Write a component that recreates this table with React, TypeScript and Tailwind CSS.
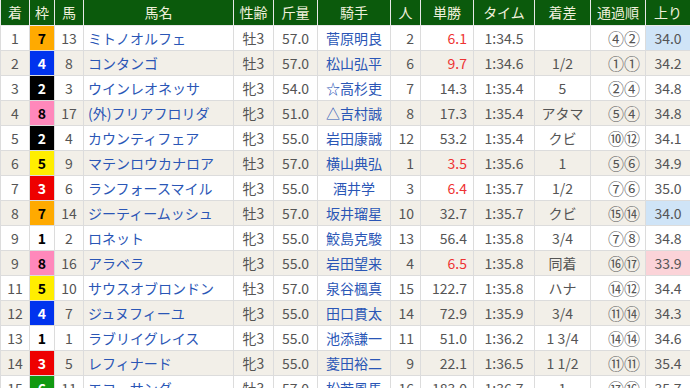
import React from 'react';

type Row = {
  rank: string;
  waku: number;
  num: string;
  name: string;
  sex: string;
  kin: string;
  jockey: string;
  pop: string;
  odds: string;
  time: string;
  diff: string;
  pass: string;
  last: string;
  lastMark?: 'blue' | 'pink';
};

const rows: Row[] = [
  { rank: '1', waku: 7, num: '13', name: 'ミトノオルフェ', sex: '牡3', kin: '57.0', jockey: '菅原明良', pop: '2', odds: '6.1', time: '1:34.5', diff: '', pass: '④②', last: '34.0', lastMark: 'blue' },
  { rank: '2', waku: 4, num: '8', name: 'コンタンゴ', sex: '牡3', kin: '57.0', jockey: '松山弘平', pop: '6', odds: '9.7', time: '1:34.6', diff: '1/2', pass: '①①', last: '34.2' },
  { rank: '3', waku: 2, num: '3', name: 'ウインレオネッサ', sex: '牝3', kin: '54.0', jockey: '☆高杉吏', pop: '7', odds: '14.3', time: '1:35.4', diff: '5', pass: '②④', last: '34.8' },
  { rank: '4', waku: 8, num: '17', name: '(外)フリアフロリダ', sex: '牝3', kin: '51.0', jockey: '△吉村誠', pop: '8', odds: '17.3', time: '1:35.4', diff: 'アタマ', pass: '⑤④', last: '34.8' },
  { rank: '5', waku: 2, num: '4', name: 'カウンティフェア', sex: '牝3', kin: '55.0', jockey: '岩田康誠', pop: '12', odds: '53.2', time: '1:35.4', diff: 'クビ', pass: '⑩⑫', last: '34.1' },
  { rank: '6', waku: 5, num: '9', name: 'マテンロウカナロア', sex: '牡3', kin: '57.0', jockey: '横山典弘', pop: '1', odds: '3.5', time: '1:35.6', diff: '1', pass: '⑤⑥', last: '34.9' },
  { rank: '7', waku: 3, num: '6', name: 'ランフォースマイル', sex: '牝3', kin: '55.0', jockey: '酒井学', pop: '3', odds: '6.4', time: '1:35.7', diff: '1/2', pass: '⑦⑥', last: '35.0' },
  { rank: '8', waku: 7, num: '14', name: 'ジーティームッシュ', sex: '牡3', kin: '57.0', jockey: '坂井瑠星', pop: '10', odds: '32.7', time: '1:35.7', diff: 'クビ', pass: '⑮⑭', last: '34.0', lastMark: 'blue' },
  { rank: '9', waku: 1, num: '2', name: 'ロネット', sex: '牝3', kin: '55.0', jockey: '鮫島克駿', pop: '13', odds: '56.4', time: '1:35.8', diff: '3/4', pass: '⑦⑧', last: '34.8' },
  { rank: '9', waku: 8, num: '16', name: 'アラベラ', sex: '牝3', kin: '55.0', jockey: '岩田望来', pop: '4', odds: '6.5', time: '1:35.8', diff: '同着', pass: '⑯⑰', last: '33.9', lastMark: 'pink' },
  { rank: '11', waku: 5, num: '10', name: 'サウスオブロンドン', sex: '牡3', kin: '57.0', jockey: '泉谷楓真', pop: '15', odds: '122.7', time: '1:35.8', diff: 'ハナ', pass: '⑭⑫', last: '34.4' },
  { rank: '12', waku: 4, num: '7', name: 'ジュヌフィーユ', sex: '牝3', kin: '55.0', jockey: '田口貫太', pop: '14', odds: '72.9', time: '1:35.9', diff: '3/4', pass: '⑪⑭', last: '34.3' },
  { rank: '13', waku: 1, num: '1', name: 'ラブリイグレイス', sex: '牝3', kin: '55.0', jockey: '池添謙一', pop: '11', odds: '51.0', time: '1:36.2', diff: '1 3/4', pass: '⑭⑭', last: '34.6' },
  { rank: '14', waku: 3, num: '5', name: 'レフィナード', sex: '牝3', kin: '55.0', jockey: '菱田裕二', pop: '9', odds: '22.1', time: '1:36.5', diff: '1 1/2', pass: '⑪⑪', last: '35.4' },
  { rank: '15', waku: 6, num: '11', name: 'エコーサンダ', sex: '牡3', kin: '57.0', jockey: '松若風馬', pop: '16', odds: '183.0', time: '1:36.7', diff: '1', pass: '⑰⑯', last: '35.7' },
];

const wakuStyle: Record<number, string> = {
  1: 'bg-white text-black',
  2: 'bg-black text-white',
  3: 'bg-[#ee0000] text-white',
  4: 'bg-[#0033ee] text-white',
  5: 'bg-[#ffee00] text-black',
  6: 'bg-[#119911] text-white',
  7: 'bg-[#ffaa00] text-black',
  8: 'bg-[#ff88bb] text-black',
};

const headers = ['着', '枠', '馬', '馬名', '性齢', '斤量', '騎手', '人', '単勝', 'タイム', '着差', '通過順', '上り'];
const widths = [29, 25, 29, 150, 40, 44, 73, 30, 53, 61, 56, 55, 45];

export default function App() {
  return (
    <div
      className="w-[690px] h-[388px] overflow-hidden bg-white"
      style={{ fontFamily: '"Noto Sans CJK JP", "Noto Sans", sans-serif' }}
    >
      <table className="table-fixed border-collapse w-[690px] text-[14px] text-[#555]">
        <colgroup>
          {widths.map((w, i) => (
            <col key={i} style={{ width: w }} />
          ))}
        </colgroup>
        <thead>
          <tr className="h-[25px] bg-[#0b5a0c] text-[#f0f0dc] text-[14px]">
            {headers.map((h) => (
              <th key={h} className="border border-[#e8e8e8] border-t-0 font-normal text-center p-0 leading-none">
                {h}
              </th>
            ))}
          </tr>
        </thead>
        <tbody>
          {rows.map((r, i) => (
            <tr key={i} className={`h-[25px] leading-none ${i % 2 === 1 ? 'bg-[#f2efe8]' : 'bg-white'}`}>
              <td className="border border-[#dcdcdc] text-center p-0">{r.rank}</td>
              <td className={`border border-[#dcdcdc] text-center p-0 font-bold ${wakuStyle[r.waku]}`}>{r.waku}</td>
              <td className="border border-[#dcdcdc] text-center p-0">{r.num}</td>
              <td className="border border-[#dcdcdc] pl-[4px] pr-0 py-0 text-[#2a56b6] whitespace-nowrap overflow-hidden">{r.name}</td>
              <td className="border border-[#dcdcdc] text-center p-0">{r.sex}</td>
              <td className="border border-[#dcdcdc] text-center p-0">{r.kin}</td>
              <td className="border border-[#dcdcdc] text-center p-0 text-[#2a56b6] whitespace-nowrap">{r.jockey}</td>
              <td className="border border-[#dcdcdc] text-right pr-[6px] pl-0 py-0">{r.pop}</td>
              <td
                className={`border border-[#dcdcdc] text-right pr-[6px] pl-0 py-0 ${parseFloat(r.odds) < 10 ? 'text-[#ee3333]' : ''}`}
              >
                {r.odds}
              </td>
              <td className="border border-[#dcdcdc] text-center p-0">{r.time}</td>
              <td className="border border-[#dcdcdc] text-center p-0 whitespace-nowrap">{r.diff}</td>
              <td className="border border-[#dcdcdc] text-right pr-[5px] pl-0 py-0 text-[16px] whitespace-nowrap">{r.pass}</td>
              <td
                className={`border border-[#dcdcdc] text-center p-0 ${
                  r.lastMark === 'blue' ? 'bg-[#cfe4f7]' : r.lastMark === 'pink' ? 'bg-[#fbd3d8]' : ''
                }`}
              >
                {r.last}
              </td>
            </tr>
          ))}
        </tbody>
      </table>
    </div>
  );
}
